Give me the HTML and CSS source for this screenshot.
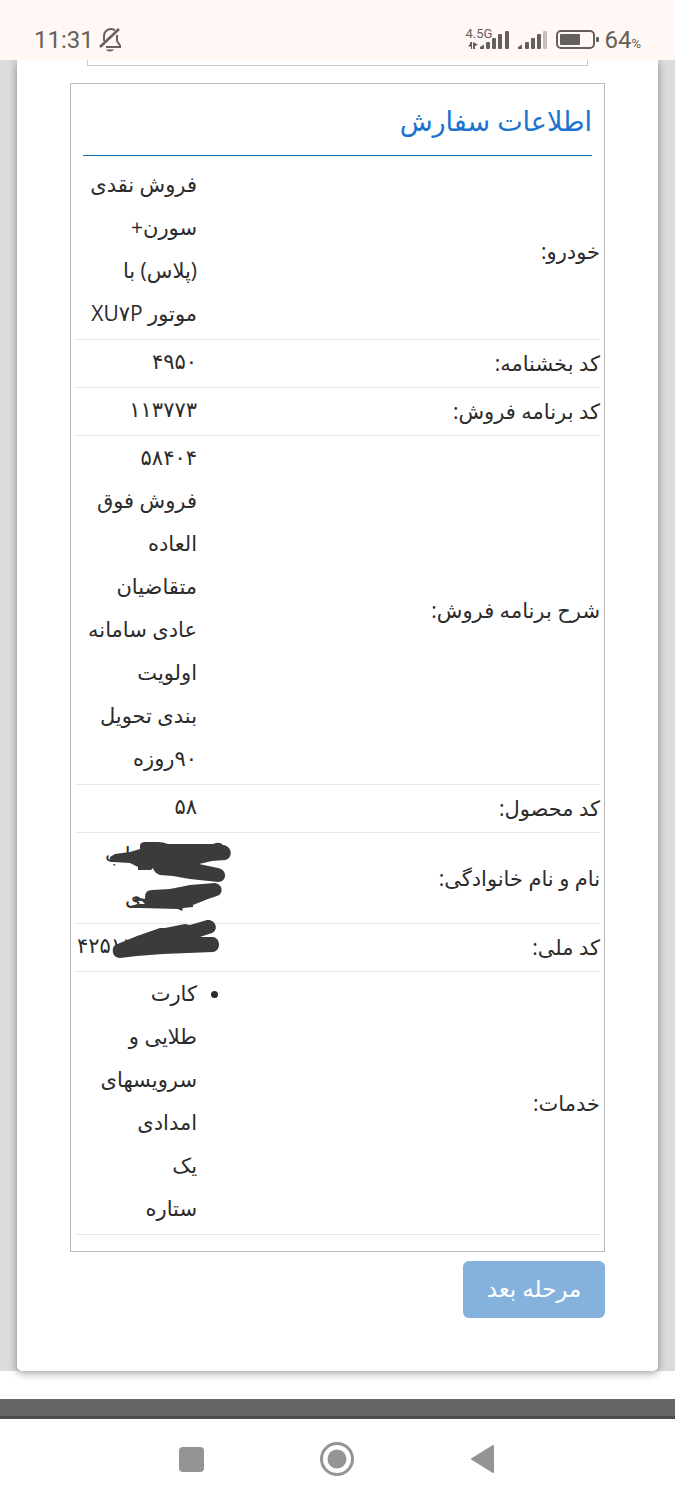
FILE: index.html
```
<!DOCTYPE html>
<html lang="fa" dir="rtl">
<head>
    <meta charset="UTF-8">
    <meta name="viewport" content="width=device-width, initial-scale=1.0">
    <title>اطلاعات سفارش</title>
    <link rel="stylesheet" href="styles.css">
</head>
<body>

    <!-- Status bar -->
    <header class="status-bar" dir="ltr">
        <div class="status-left">
            <span class="clock">11:31</span>
            <svg width="24" height="26" viewBox="0 0 24 26" fill="none" stroke="#66605c" stroke-width="2">
                <path d="M5 14V9C5 5 8 2 12 2C14 2 15 2.500 16 3.500"/>
                <path d="M18 8V14L21 18.500V20H7"/>
                <path d="M1 20L20 2" stroke-width="2.500"/>
                <path d="M7 22.500H15C14 25 8 25 7 22.500Z" fill="#66605c" stroke="none"/>
            </svg>
        </div>
        <div class="status-right">
            <div class="network">
                <span class="network-type">4.5G</span>
                <svg width="46" height="20" viewBox="0 0 46 20" fill="#66605c">
                    <path d="M3 12H5V19H4V17L1 16L3 14ZM6 12L11 14.500L8 16V19H6Z"/>
                    <path d="M13 17L17 14.500V19H13Z"/>
                    <rect x="19" y="12" width="4" height="7" rx="1"/>
                    <rect x="25" y="8" width="4" height="11" rx="1"/>
                    <rect x="31" y="4" width="4" height="15" rx="1"/>
                    <rect x="38" y="1" width="4" height="18" rx="1"/>
                </svg>
            </div>
            <svg width="32" height="20" viewBox="0 0 32 20" fill="#66605c">
                <path d="M1 17L5 14.500V19H1Z"/>
                <rect x="8" y="12" width="4" height="7" rx="1"/>
                <rect x="14" y="8" width="4" height="11" rx="1"/>
                <rect x="20" y="4" width="4" height="15" rx="1"/>
                <rect x="26" y="1" width="4" height="18" rx="1" fill="#c5beba"/>
            </svg>
            <svg class="battery" width="44" height="20" viewBox="0 0 44 20" fill="#66605c">
                <rect x="1" y="1" width="37" height="17" rx="4" fill="none" stroke="#66605c" stroke-width="2"/>
                <rect x="4" y="4" width="20" height="11" rx="1"/>
                <rect x="40" y="7" width="3" height="5" rx="1"/>
            </svg>
            <span class="battery-level">64<small>%</small></span>
        </div>
    </header>

    <!-- Order page -->
    <main class="page">
        <div class="card">
            <div class="previous-box"></div>

            <section class="order-box">
                <h2>اطلاعات سفارش</h2>
                <table class="order-table">
                    <tbody>
                        <tr>
                            <th scope="row">خودرو:</th>
                            <td>فروش نقدی<br>سورن+<br>(پلاس) با<br>موتور XU۷P</td>
                        </tr>
                        <tr>
                            <th scope="row">کد بخشنامه:</th>
                            <td>۴۹۵۰</td>
                        </tr>
                        <tr>
                            <th scope="row">کد برنامه فروش:</th>
                            <td>۱۱۳۷۷۳</td>
                        </tr>
                        <tr>
                            <th scope="row">شرح برنامه فروش:</th>
                            <td>۵۸۴۰۴<br>فروش فوق<br>العاده<br>متقاضیان<br>عادی سامانه<br>اولویت<br>بندی تحویل<br>۹۰روزه</td>
                        </tr>
                        <tr>
                            <th scope="row">کد محصول:</th>
                            <td>۵۸</td>
                        </tr>
                        <tr>
                            <th scope="row">نام و نام خانوادگی:</th>
                            <td>
                                <div class="redacted">
                                    <span class="first-name">اب</span>
                                    <span class="last-name">ی</span>
                                    <svg class="scribble" width="160" height="90" viewBox="0 0 160 90" fill="#3b3b3b">
                                        <path d="M35 24L40 21L55 19L65 16V12Q66 9 70 9H83Q88 9 93 11H138Q145 8 148 12C158 13 158 26 150 27L137 28L124 31L143 35C153 37 152 49 143 49L115 46L98 43L85 42Q79 40 78 35L76 37H63V34L55 30L38 29Q34 28 35 24Z"/>
                                        <path d="M60 64L70 66V64Q70 57 77 57L95 56L115 52L140 50C148 51 149 61 142 63L133 66L118 72V74L108 75L107 78L103 76L65 75H55V73L63 71H70L67 68H60Z"/>
                                    </svg>
                                </div>
                            </td>
                        </tr>
                        <tr>
                            <th scope="row">کد ملی:</th>
                            <td>
                                <div class="redacted">
                                    <span class="national-id">۴۲۵۱۱</span>
                                    <svg class="scribble" width="160" height="46" viewBox="0 0 160 46" fill="#3b3b3b">
                                        <path d="M40 21L62 12L85 4H90L110 0L115 1L132 -4C141 -5 144 6 137 9L125 13H138C146 14 146 27 138 28L88 30L62 32L45 34C37 34 36 24 40 21Z"/>
                                    </svg>
                                </div>
                            </td>
                        </tr>
                        <tr>
                            <th scope="row">خدمات:</th>
                            <td>
                                <ul class="services">
                                    <li>کارت<br>طلایی و<br>سرویسهای<br>امدادی<br>یک<br>ستاره</li>
                                </ul>
                            </td>
                        </tr>
                    </tbody>
                </table>
            </section>

            <button type="button" class="next-btn">مرحله بعد</button>
        </div>
    </main>

    <div class="page-footer"></div>

    <!-- Navigation bar -->
    <nav class="nav-bar" dir="ltr">
        <button type="button" aria-label="Recent apps">
            <svg width="36" height="36" viewBox="0 0 36 36"><rect x="5" y="5" width="25" height="25" rx="4" fill="#949494"/></svg>
        </button>
        <button type="button" aria-label="Home">
            <svg width="36" height="36" viewBox="0 0 36 36">
                <circle cx="18" cy="17" r="15.500" fill="none" stroke="#949494" stroke-width="3"/>
                <circle cx="18" cy="17" r="9.500" fill="#949494"/>
            </svg>
        </button>
        <button type="button" aria-label="Back">
            <svg width="36" height="36" viewBox="0 0 36 36"><path d="M7 17L28 4V30Z" fill="#949494" stroke="#949494" stroke-width="2" stroke-linejoin="round"/></svg>
        </button>
    </nav>

</body>
</html>
```
FILE: styles.css
```
/* Global Styles */
* {
    box-sizing: border-box;
}

body {
    margin: 0;
    font-family: "Open Sans", "DejaVu Sans", sans-serif;
    font-size: 21px;
    line-height: 43px;
    color: #2b2b2b;
    background-color: #fff;
}

button {
    font-family: inherit;
    border: none;
    cursor: pointer;
}

svg {
    display: block;
}

/* Status Bar */
.status-bar {
    position: relative;
    height: 60px;
    padding: 20px 34px 0;
    display: flex;
    justify-content: space-between;
    align-items: center;
    font-family: Roboto, sans-serif;
    line-height: 40px;
    color: #66605c;
    background-color: #fff8f4;
    z-index: 1;
}

.status-left,
.status-right {
    display: flex;
    align-items: center;
}

.status-left {
    gap: 5px;
}

.clock,
.battery-level {
    font-size: 24px;
    line-height: 40px;
}

.battery-level small {
    font-size: 13px;
    line-height: 13px;
}

.network {
    position: relative;
    padding-left: 2px;
    margin-right: 4px;
}

.network-type {
    position: absolute;
    top: -3px;
    left: 0;
    font-size: 13px;
    line-height: 14px;
}

.battery {
    margin: 0 4px 0 7px;
}

/* Page and Card */
.page {
    padding: 0 17px;
    background-color: #dcdcdc;
}

.card {
    padding: 0 53px 53px;
    border-radius: 0 0 5px 5px;
    background-color: #fff;
    box-shadow: 0 2px 8px rgba(0, 0, 0, 0.4);
}

.previous-box {
    height: 6px;
    margin: 0 17px 17px;
    border: 1px solid #ccc;
    border-top: none;
}

.order-box {
    padding: 0 4px 16px;
    border: 1px solid #bbb;
}

.order-box h2 {
    margin: 0 8px 7px;
    padding: 15px 0 12px;
    font-size: 27px;
    font-weight: normal;
    line-height: 44px;
    color: #1a73cc;
    border-bottom: 1px solid #1a73b8;
}

/* Order Table */
.order-table {
    width: 100%;
    table-layout: fixed;
    border-collapse: collapse;
}

.order-table th,
.order-table td {
    padding: 2px 0;
    text-align: right;
    vertical-align: middle;
    border-bottom: 1px solid #e8e8e8;
}

.order-table th {
    font-weight: normal;
}

.order-table td {
    width: 124px;
    padding: 0 2px 4px 0;
    white-space: nowrap;
}

.services {
    margin: 0;
    padding: 0;
}

/* Hidden personal data */
.redacted {
    position: relative;
    text-align: left;
}

.redacted span {
    display: block;
}

.redacted .first-name {
    padding-left: 30px;
}

.redacted .last-name {
    padding-left: 50px;
}

.redacted .national-id {
    padding-left: 2px;
}

.scribble {
    position: absolute;
    top: 0;
    left: 0;
    overflow: visible;
}

/* Buttons */
.next-btn {
    display: block;
    min-width: 142px;
    height: 57px;
    margin-top: 9px;
    padding: 0 22px 4px;
    font-size: 23px;
    color: #fff;
    background-color: #85b2dd;
    border-radius: 6px;
}

/* Footer and Navigation Bar */
.page-footer {
    height: 20px;
    margin-top: 28px;
    background-color: #666;
    border-bottom: 3px solid #4d4d4d;
}

.nav-bar {
    height: 81px;
    padding: 0 119px;
    display: flex;
    justify-content: space-around;
    align-items: center;
    background-color: #fff;
}

.nav-bar button {
    padding: 0;
    background: none;
}
```
